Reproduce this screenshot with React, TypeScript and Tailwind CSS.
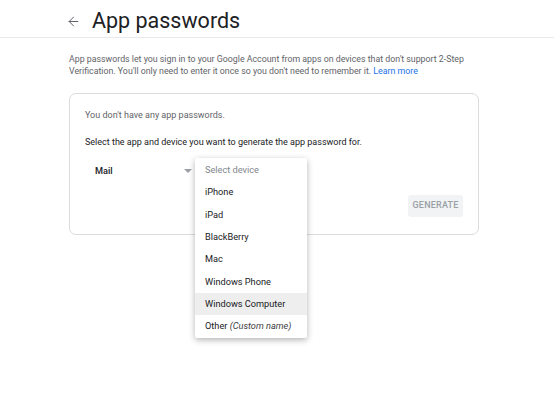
import { ArrowLeft } from "lucide-react";

const devices = ["iPhone", "iPad", "BlackBerry", "Mac", "Windows Phone", "Windows Computer"];

export default function App() {
  return (
    <div className="w-[554px] h-[405px] bg-white overflow-hidden text-[#3c4043]" style={{ fontFamily: "Roboto, 'Liberation Sans', sans-serif" }}>
      {/* header */}
      <div className="h-[38px] border-b border-[#e8eaed] flex items-center pt-[5px] pl-[66px]">
        <ArrowLeft size={15} strokeWidth={1.6} className="text-[#5f6368]" />
        <h1 className="ml-[11px] text-[21.5px] text-[#202124] leading-none">App passwords</h1>
      </div>

      <div className="ml-[69px] w-[410px]">
        <p className="mt-[15px] text-[8.8px] leading-[12px] text-[#5f6368] whitespace-nowrap">
          App passwords let you sign in to your Google Account from apps on devices that don't support 2-Step
          <br />
          Verification. You'll only need to enter it once so you don't need to remember it.{" "}
          <span className="text-[#1a73e8]">Learn more</span>
        </p>

        <div className="mt-[16px] h-[142px] border border-[#dadce0] rounded-[7px] px-[15px] relative">
          <p className="mt-[14.5px] text-[9px] leading-[13px] text-[#5f6368]">You don't have any app passwords.</p>
          <p className="mt-[14px] text-[9px] leading-[13px] text-[#202124]">Select the app and device you want to generate the app password for.</p>

          <div className="mt-[15.5px] flex items-center h-[14px] pl-[10px] w-[111px]">
            <span className="text-[9.2px] font-medium text-[#202124]">Mail</span>
            <span className="ml-auto mr-[4px] w-0 h-0 border-l-[4px] border-r-[4px] border-t-[4px] border-l-transparent border-r-transparent border-t-[#9aa0a6]" />
          </div>

          <div className="flex justify-end mt-[17px]">
            <button className="h-[22px] w-[55px] bg-[#f1f3f4] rounded-[3px] text-[9px] font-medium text-[#9aa0a6] tracking-[0.2px]">GENERATE</button>
          </div>

          {/* device menu */}
          <div className="absolute left-[125px] top-[64px] w-[112px] bg-white rounded-[2px] shadow-[0_2px_6px_rgba(0,0,0,0.3)] py-[1px] z-10">
            <div className="h-[22px] flex items-center px-[10px] text-[9.2px] text-[#80868b]">Select device</div>
            {devices.map((d) => (
              <div key={d} className={`h-[22.4px] flex items-center px-[10px] text-[9.2px] text-[#202124] ${d === "Windows Computer" ? "bg-[#eeeeee]" : ""}`}>{d}</div>
            ))}
            <div className="h-[22px] flex items-center px-[10px] text-[9.2px] text-[#202124] whitespace-nowrap">
              Other&nbsp;<i className="text-[#3c4043]">(Custom name)</i>
            </div>
          </div>
        </div>
      </div>
    </div>
  );
}
